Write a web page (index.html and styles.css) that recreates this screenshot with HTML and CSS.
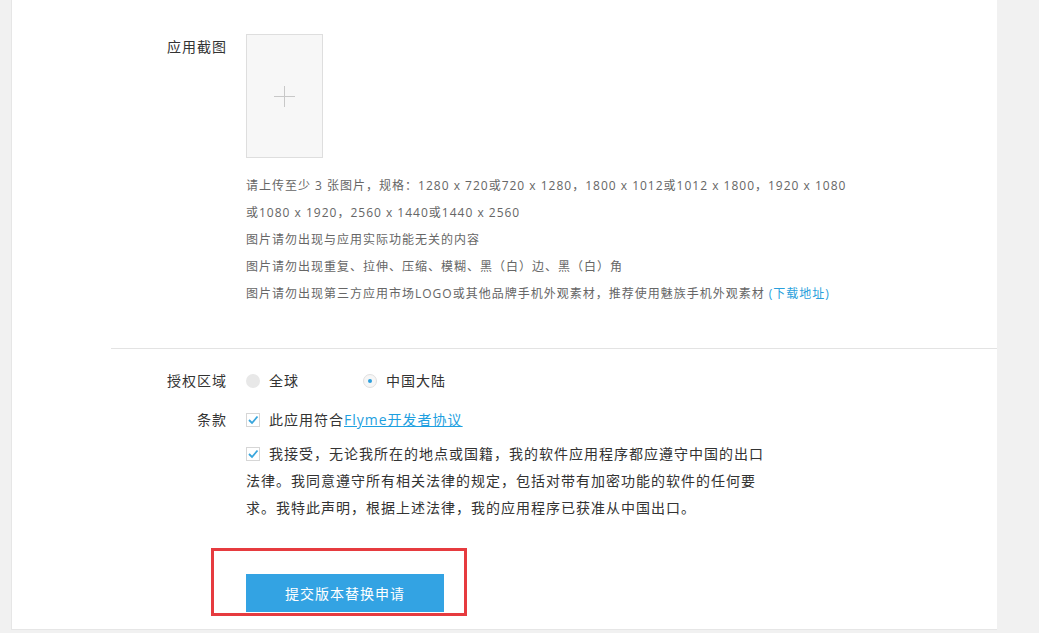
FILE: index.html
```html
<!DOCTYPE html>
<html lang="zh-CN">
<head>
<meta charset="utf-8">
<title>提交版本替换申请</title>
<link rel="stylesheet" href="styles.css">
</head>
<body>
<div class="panel">
  <section class="sec sec-shots">
    <div class="row">
      <div class="label">应用截图</div>
      <div class="field">
        <div class="upload"><span class="plus"></span></div>
        <ul class="hints">
          <li>请上传至少 3 张图片，规格：1280 x 720或720 x 1280，1800 x 1012或1012 x 1800，1920 x 1080 或1080 x 1920，2560 x 1440或1440 x 2560</li>
          <li>图片请勿出现与应用实际功能无关的内容</li>
          <li>图片请勿出现重复、拉伸、压缩、模糊、黑（白）边、黑（白）角</li>
          <li>图片请勿出现第三方应用市场LOGO或其他品牌手机外观素材，推荐使用魅族手机外观素材 <a class="dl" href="#">(下载地址)</a></li>
        </ul>
      </div>
    </div>
  </section>
  <div class="divider"></div>
  <section class="sec sec-terms">
    <div class="row row-region">
      <div class="label">授权区域</div>
      <div class="field options">
        <label class="opt"><span class="radio"></span>全球</label>
        <label class="opt"><span class="radio on"></span>中国大陆</label>
      </div>
    </div>
    <div class="row row-terms">
      <div class="label">条款</div>
      <div class="field checks">
        <p class="check"><span class="cb"><svg viewBox="0 0 14 14" width="14" height="14"><rect x="0.5" y="0.5" width="13" height="13" fill="#fff" stroke="#d6d6d6"/><polyline points="3,7 6,10 11.5,3.5" fill="none" stroke="#39a6dd" stroke-width="1.8"/></svg></span>此应用符合<a class="agree" href="#">Flyme开发者协议</a></p>
        <p class="check long"><span class="cb"><svg viewBox="0 0 14 14" width="14" height="14"><rect x="0.5" y="0.5" width="13" height="13" fill="#fff" stroke="#d6d6d6"/><polyline points="3,7 6,10 11.5,3.5" fill="none" stroke="#39a6dd" stroke-width="1.8"/></svg></span>我接受，无论我所在的地点或国籍，我的软件应用程序都应遵守中国的出口法律。我同意遵守所有相关法律的规定，包括对带有加密功能的软件的任何要求。我特此声明，根据上述法律，我的应用程序已获准从中国出口。</p>
      </div>
    </div>
    <div class="row row-submit">
      <div class="label"></div>
      <div class="field">
        <div class="submit-wrap">
          <button class="submit" type="button">提交版本替换申请</button>
          <span class="mark"></span>
        </div>
      </div>
    </div>
  </section>
</div>
</body>
</html>
```
FILE: styles.css
```css
* { box-sizing: border-box; }
html, body { margin: 0; padding: 0; }
body {
  background: #f1f1f1;
  font-family: "Open Sans", "Noto Sans CJK SC", sans-serif;
  color: #333;
  letter-spacing: 1px;
  height: 633px;
  overflow: hidden;
}
.panel {
  margin-left: 11px;
  width: 986px;
  background: #fff;
  border-left: 1px solid #e6e6e6;
  border-bottom: 1px solid #e6e6e6;
}
.row { display: flex; gap: 19px; }
.label {
  width: 215px;
  flex: none;
  text-align: right;
  font-size: 14px;
  line-height: 27px;
}
.field { flex: 1; min-width: 0; }

.sec-shots { padding: 34px 0 41px; }
.sec-shots .label { line-height: 26px; }
.upload {
  width: 77px;
  height: 124px;
  border: 1px solid #dedede;
  background: #f7f7f7;
  display: flex;
  align-items: center;
  justify-content: center;
}
.plus { position: relative; width: 21px; height: 21px; display: block; }
.plus::before, .plus::after {
  content: "";
  position: absolute;
  background: #c8c8c8;
}
.plus::before { left: 0; right: 0; top: 10px; height: 1px; }
.plus::after { top: 0; bottom: 0; left: 10px; width: 1px; }
.hints {
  list-style: none;
  margin: 14px 0 0;
  padding: 0;
  width: 612px;
  font-size: 12px;
  line-height: 27px;
  color: #666;
}
.dl { color: #2a9fdc; text-decoration: none; }

.divider { margin-left: 99px; height: 1px; background: #e3e3e3; }

.sec-terms { padding: 18px 0 17px; }
.options { display: flex; font-size: 14px; line-height: 27px; }
.opt { display: inline-flex; align-items: center; }
.opt:first-child { width: 117px; }
.radio {
  width: 14px; height: 14px;
  border-radius: 50%;
  background: #e8e8e8;
  margin-right: 9px;
  position: relative;
}
.radio.on { background: #f6f6f6; border: 1px solid #e0e0e0; }
.radio.on::after {
  content: "";
  position: absolute;
  left: 4px; top: 4px;
  width: 4px; height: 4px;
  border-radius: 50%;
  background: #2d9fdc;
}
.row-terms { margin-top: 12px; }
.check { margin: 0; font-size: 14px; line-height: 27px; }
.check.long { margin-top: 7px; width: 529px; }
.cb { display: inline-block; width: 14px; height: 14px; margin-right: 9px; vertical-align: -2px; }
.cb svg { display: block; }
.agree { color: #1ea0e0; text-decoration: underline; }

.row-submit { margin-top: 53px; }
.submit-wrap { position: relative; width: 198px; }
.submit {
  display: block;
  width: 198px;
  height: 38px;
  border: 0;
  background: #33a3e3;
  color: #fff;
  font-family: inherit;
  font-size: 14px;
  letter-spacing: 1px;
  cursor: pointer;
}
.mark {
  position: absolute;
  left: -35px;
  top: -26px;
  width: 256px;
  height: 68px;
  border: 3px solid #e63b3f;
  pointer-events: none;
}
```
